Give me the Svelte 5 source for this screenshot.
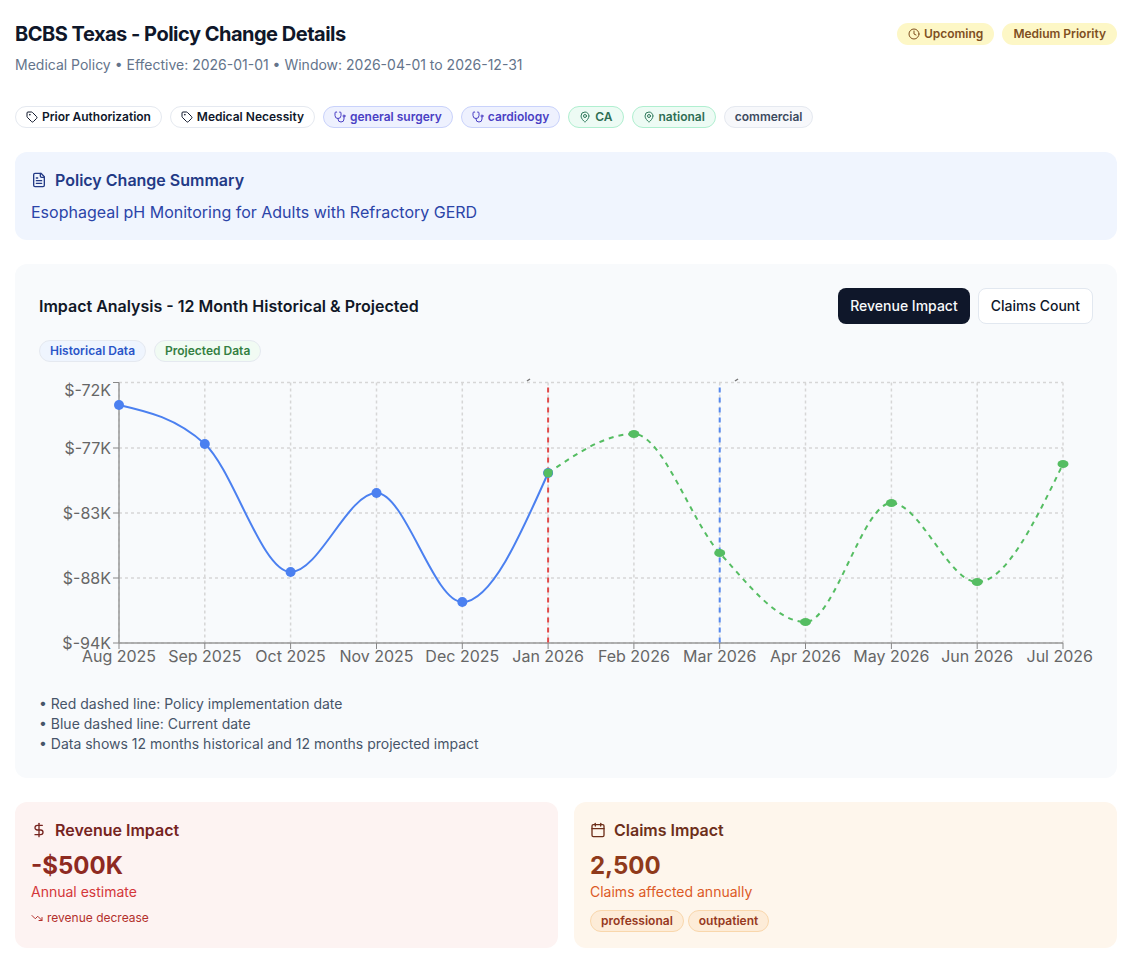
<script>
  const xs = [119, 204.8, 290.6, 376.5, 462.3, 548.1, 633.9, 719.7, 805.5, 891.4, 977.2, 1063];
  const months = ['Aug 2025','Sep 2025','Oct 2025','Nov 2025','Dec 2025','Jan 2026','Feb 2026','Mar 2026','Apr 2026','May 2026','Jun 2026','Jul 2026'];
  const ys = [405, 444, 572, 493, 602, 473, 434, 553, 622, 503, 582, 464];
  const yTicks = [[382.5,'$-72K',395.5],[448,'$-77K',453.5],[513,'$-83K',518.5],[578,'$-88K',583.5],[643,'$-94K',648.5]];
  const pts = xs.map((x, i) => [x, ys[i]]);

  function monotone(p) {
    const n = p.length;
    const d = [], m = [];
    for (let i = 0; i < n - 1; i++) d.push((p[i+1][1]-p[i][1])/(p[i+1][0]-p[i][0]));
    for (let i = 1; i < n - 1; i++) {
      const h0 = p[i][0]-p[i-1][0], h1 = p[i+1][0]-p[i][0];
      const s = (Math.sign(d[i-1]) + Math.sign(d[i])) || 0;
      const q = (d[i-1]*h1 + d[i]*h0)/(h0+h1);
      m[i] = s * Math.min(Math.abs(d[i-1]), Math.abs(d[i]), 0.5*Math.abs(q)) || 0;
    }
    m[0] = (3*d[0]-m[1])/2;
    m[n-1] = (3*d[n-2]-m[n-2])/2;
    let s = `M${p[0][0]},${p[0][1]}`;
    for (let i = 0; i < n-1; i++) {
      const dx = (p[i+1][0]-p[i][0])/3;
      s += `C${p[i][0]+dx},${p[i][1]+m[i]*dx} ${p[i+1][0]-dx},${p[i+1][1]-m[i+1]*dx} ${p[i+1][0]},${p[i+1][1]}`;
    }
    return s;
  }
  const hist = monotone(pts.slice(0, 6));
  const proj = monotone(pts.slice(5));
</script>

<main class="page">
  <header class="head">
    <div>
      <h1>BCBS Texas - Policy Change Details</h1>
      <p class="sub">Medical Policy • Effective: 2026-01-01 • Window: 2026-04-01 to 2026-12-31</p>
    </div>
    <div class="status">
      <span class="pill yellow">
        <svg class="i12" viewBox="0 0 24 24"><circle cx="12" cy="12" r="10"/><path d="M12 6v6l4 2"/></svg>
        Upcoming
      </span>
      <span class="pill yellow">Medium Priority</span>
    </div>
  </header>

  <div class="chips">
    {#each ['Prior Authorization','Medical Necessity'] as t}
      <span class="pill chip white">
        <svg class="i12" viewBox="0 0 24 24"><path d="M12.586 2.586A2 2 0 0 0 11.172 2H4a2 2 0 0 0-2 2v7.172a2 2 0 0 0 .586 1.414l8.704 8.704a2.426 2.426 0 0 0 3.42 0l6.58-6.58a2.426 2.426 0 0 0 0-3.42z"/><circle cx="7.5" cy="7.5" r=".5"/></svg>
        {t}
      </span>
    {/each}
    {#each ['general surgery','cardiology'] as t}
      <span class="pill chip indigo">
        <svg class="i12" viewBox="0 0 24 24"><path d="M4.8 2.3A.3.3 0 1 0 5 2H4a2 2 0 0 0-2 2v5a6 6 0 0 0 6 6a6 6 0 0 0 6-6V4a2 2 0 0 0-2-2h-1a.2.2 0 1 0 .3.3"/><path d="M8 15v1a6 6 0 0 0 6 6a6 6 0 0 0 6-6v-4"/><circle cx="20" cy="10" r="2"/></svg>
        {t}
      </span>
    {/each}
    {#each ['CA','national'] as t}
      <span class="pill chip green">
        <svg class="i12" viewBox="0 0 24 24"><path d="M20 10c0 4.993-5.539 10.193-7.399 11.799a1 1 0 0 1-1.202 0C9.539 20.193 4 14.993 4 10a8 8 0 0 1 16 0"/><circle cx="12" cy="10" r="3"/></svg>
        {t}
      </span>
    {/each}
    <span class="pill chip slate">commercial</span>
  </div>

  <section class="card summary">
    <h2>
      <svg class="i16" viewBox="0 0 24 24"><path d="M15 2H6a2 2 0 0 0-2 2v16a2 2 0 0 0 2 2h12a2 2 0 0 0 2-2V7Z"/><path d="M14 2v4a2 2 0 0 0 2 2h4"/><path d="M10 9H8"/><path d="M16 13H8"/><path d="M16 17H8"/></svg>
      Policy Change Summary
    </h2>
    <p>Esophageal pH Monitoring for Adults with Refractory GERD</p>
  </section>

  <section class="impact">
    <div class="impact-head">
      <h3>Impact Analysis - 12 Month Historical &amp; Projected</h3>
      <div class="btns">
        <button class="btn dark">Revenue Impact</button>
        <button class="btn">Claims Count</button>
      </div>
    </div>
    <div class="legend">
      <span class="pill chip hist">Historical Data</span>
      <span class="pill chip projd">Projected Data</span>
    </div>

    <svg class="chart" width="1054" height="290" viewBox="39 378 1054 290">
      <g class="grid">
        {#each yTicks as [y]}<line x1="119" x2="1063" y1={y} y2={y}/>{/each}
        {#each xs as x}<line x1={x} x2={x} y1="382.5" y2="643"/>{/each}
      </g>

      <line class="axis" x1="119" x2="119" y1="382.5" y2="643"/>
      <line class="axis" x1="119" x2="1063" y1="643" y2="643"/>
      {#each yTicks as [y, label, base]}
        <line class="tick" x1="113" x2="119" y1={y} y2={y}/>
        <text class="lbl" x="111" y={base} text-anchor="end">{label}</text>
      {/each}
      {#each xs as x, i}
        <line class="tick" x1={x} x2={x} y1="643" y2="649"/>
        <text class="lbl" x={i === 11 ? 1093 : x} y="662" text-anchor={i === 11 ? 'end' : 'middle'}>{months[i]}</text>
      {/each}

      <path class="mark" d="M527 381l3-2"/>
      <path class="mark" d="M735 381l3-2"/>
      <line class="ref red" x1="548.1" x2="548.1" y1="382.5" y2="643"/>
      <line class="ref blue" x1="719.7" x2="719.7" y1="382.5" y2="643"/>

      <path class="line hist-line" d={hist}/>
      {#each pts.slice(0, 6) as [x, y]}<circle class="dot-b" cx={x} cy={y} r="5"/>{/each}
      <path class="line proj-line" d={proj}/>
      <circle class="dot-g" cx={pts[5][0]} cy={pts[5][1]} r="4.6"/>
      {#each pts.slice(6) as [x, y]}<ellipse class="dot-g" cx={x} cy={y} rx="5.5" ry="4"/>{/each}
    </svg>

    <div class="notes">
      <p>• Red dashed line: Policy implementation date</p>
      <p>• Blue dashed line: Current date</p>
      <p>• Data shows 12 months historical and 12 months projected impact</p>
    </div>
  </section>

  <div class="stats">
    <section class="card rev">
      <h2>
        <svg class="i16" viewBox="0 0 24 24"><line x1="12" x2="12" y1="2" y2="22"/><path d="M17 5H9.5a3.5 3.5 0 0 0 0 7h5a3.5 3.5 0 0 1 0 7H6"/></svg>
        Revenue Impact
      </h2>
      <div class="big">-$500K</div>
      <p class="cap">Annual estimate</p>
      <p class="trend">
        <svg class="i12" viewBox="0 0 24 24"><path d="M16 17h6v-6"/><path d="m22 17-8.5-8.5-5 5L2 7"/></svg>
        revenue decrease
      </p>
    </section>
    <section class="card claims">
      <h2>
        <svg class="i16" viewBox="0 0 24 24"><path d="M8 2v4"/><path d="M16 2v4"/><rect width="18" height="18" x="3" y="4" rx="2"/><path d="M3 10h18"/></svg>
        Claims Impact
      </h2>
      <div class="big">2,500</div>
      <p class="cap">Claims affected annually</p>
      <div class="tags">
        <span class="pill chip orange">professional</span>
        <span class="pill chip orange">outpatient</span>
      </div>
    </section>
  </div>
</main>

<style>
  :global(body) { margin: 0; background: #fff; font-family: Inter, "Liberation Sans", sans-serif; }
  * { box-sizing: border-box; }
  h1, h2, h3, p { margin: 0; }
  svg { fill: none; stroke: currentColor; stroke-width: 2; stroke-linecap: round; stroke-linejoin: round; flex: none; }
  .i12 { width: 12px; height: 12px; }
  .i16 { width: 16px; height: 16px; }

  .page { width: 1138px; padding: 24px 21px 20px 15px; display: flex; flex-direction: column; }
  .head { display: flex; justify-content: space-between; align-items: flex-start; }
  h1 { font-size: 20px; line-height: 20px; font-weight: 700; color: #0f172a; letter-spacing: -0.5px; }
  .sub { margin-top: 11px; font-size: 14px; line-height: 20px; color: #64748b; }
  .status { display: flex; gap: 8px; margin-top: -1px; }

  .pill { display: inline-flex; align-items: center; gap: 4px; border-radius: 999px; font-size: 12px; font-weight: 600; line-height: 16px; white-space: nowrap; }
  .yellow { background: #fdf7c6; color: #7f4f1f; padding: 3px 11px; height: 22px; }
  .chip { border: 1px solid transparent; padding: 2px 10px; height: 22px; }
  .chips { display: flex; gap: 8px; margin-top: 31px; }
  .white { background: #fff; border-color: #e5e9f0; color: #0f172a; }
  .white:first-child { letter-spacing: -0.04px; }
  .indigo { background: #eef1fe; border-color: #c9d2fb; color: #4a3fc4; }
  .green { background: #edfbf4; border-color: #b0efd0; color: #2f6f55; }
  .green svg { color: #2f7a5c; }
  .slate { background: #f7f8fb; border-color: #e5e9f0; color: #3c4a60; }
  .hist { background: #eff5fe; border-color: #e5e9f0; color: #2a55c8; }
  .projd { background: #f1fbf3; border-color: #e5e9f0; color: #347f42; }
  .orange { background: #fdecd8; border-color: #f9d7ac; color: #96391e; }

  .card { border-radius: 12px; padding: 16px; }
  .card h2 { display: flex; align-items: center; gap: 8px; font-size: 16px; line-height: 24px; font-weight: 600; }
  .summary { margin-top: 24px; background: #f0f5fe; height: 88px; }
  .summary h2 { color: #233a86; }
  .summary p { margin-top: 8px; font-size: 16px; line-height: 24px; color: #2b44a8; }

  .impact { margin-top: 24px; background: #f8fafc; border-radius: 12px; padding: 24px; height: 514px; }
  .impact-head { display: flex; justify-content: space-between; align-items: center; }
  h3 { font-size: 16px; line-height: 24px; font-weight: 600; color: #111827; }
  .btns { display: flex; gap: 8px; }
  .btn { font: 500 14px/20px Inter, sans-serif; height: 36px; padding: 0 12px; border-radius: 8px; border: 1px solid #e2e8f0; background: #fff; color: #0f172a; }
  .dark { background: #0f172a; border: none; color: #f8fafc; }
  .legend { display: flex; gap: 8px; margin-top: 16px; }
  .chart { display: block; margin-top: 16px; overflow: visible; }
  .grid line { stroke: #d6d6d6; stroke-width: 1.5; stroke-dasharray: 3 3; stroke-linecap: butt; }
  .axis { stroke: #999; stroke-width: 1.5; stroke-linecap: butt; }
  .tick { stroke: #888; stroke-width: 1; stroke-linecap: butt; }
  .lbl { fill: #666; stroke: none; font: 400 16px Inter, sans-serif; }
  .mark { stroke: #777; stroke-width: 1.5; stroke-linecap: butt; }
  .ref { stroke-width: 2; stroke-dasharray: 5 5; stroke-dashoffset: 5; stroke-linecap: butt; }
  .red { stroke: #e24a4a; }
  .blue { stroke: #5488f0; }
  .line { stroke-width: 2; fill: none; }
  .hist-line { stroke: #4b80f0; }
  .proj-line { stroke: #55bd62; stroke-dasharray: 5 5; stroke-linecap: butt; }
  .dot-b { fill: #4b80f0; stroke: none; }
  .dot-g { fill: #55bd62; stroke: none; }

  .notes { margin-top: 26px; font-size: 14px; line-height: 20px; color: #475569; }

  .stats { display: grid; grid-template-columns: 1fr 1fr; gap: 16px; margin-top: 24px; }
  .stats .card { height: 146px; }
  .big { margin-top: 8px; font-size: 24px; line-height: 32px; font-weight: 700; }
  .cap { font-size: 14px; line-height: 20px; }
  .rev { background: #fdf3f2; }
  .rev h2 { color: #76241f; }
  .rev .big { color: #8e2a22; }
  .rev .cap { color: #d4373a; }
  .trend { display: flex; align-items: center; gap: 4px; margin-top: 8px; font-size: 12px; line-height: 16px; color: #b3302c; }
  .claims { background: #fef6ec; }
  .claims h2 { color: #6d2f1a; }
  .claims .big { color: #8f3a1b; }
  .claims .cap { color: #dc5a26; }
  .tags { display: flex; gap: 4px; margin-top: 8px; }
</style>
